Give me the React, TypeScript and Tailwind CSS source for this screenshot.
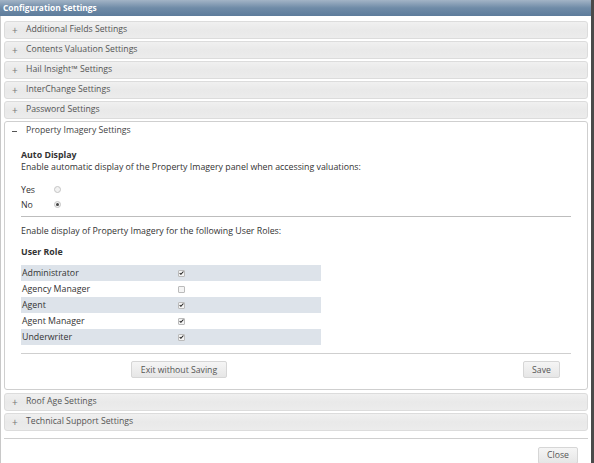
import { useState } from "react";

const FONT = { fontFamily: '"Open Sans", "DejaVu Sans", sans-serif' };

const collapsed = [
  "Additional Fields Settings",
  "Contents Valuation Settings",
  "Hail Insight™ Settings",
  "InterChange Settings",
  "Password Settings",
];

const roles = [
  { name: "Administrator", on: true },
  { name: "Agency Manager", on: false },
  { name: "Agent", on: true },
  { name: "Agent Manager", on: true },
  { name: "Underwriter", on: true },
];

function SectionHeader({ title }: { title: string }) {
  return (
    <div className="flex h-[18px] items-center rounded-[3px] border border-[#dcdcdc] bg-gradient-to-b from-[#f0f0f0] via-[#e9e9e9] to-[#ececec] pl-[7px] text-[8.7px] text-[#555]">
      <span className="w-[14px] text-[10px] leading-none text-[#777]">+</span>
      <span>{title}</span>
    </div>
  );
}

function Checkbox({ checked }: { checked: boolean }) {
  return (
    <span className="flex h-[7px] w-[7px] items-center justify-center rounded-[1px] border border-[#bbb] bg-[#f4f4f4]">
      {checked && (
        <svg width="6" height="6" viewBox="0 0 6 6">
          <path d="M0.8 3.2 L2.3 4.6 L5.3 1.2" stroke="#222" strokeWidth="1.3" fill="none" />
        </svg>
      )}
    </span>
  );
}

function Radio({ checked }: { checked: boolean }) {
  return (
    <span className="flex h-[7px] w-[7px] items-center justify-center rounded-full border border-[#c4c4c4] bg-[#f2f2f2]">
      {checked && <span className="h-[3px] w-[3px] rounded-full bg-[#444]" />}
    </span>
  );
}

function Button({ label, className = "" }: { label: string; className?: string }) {
  return (
    <button
      className={`flex h-[17px] items-center justify-center rounded-[2px] border border-[#d6d6d6] bg-gradient-to-b from-[#f5f5f5] to-[#e6e6e6] text-[8.7px] text-[#555] ${className}`}
    >
      {label}
    </button>
  );
}

export default function App() {
  const [autoDisplay] = useState(false);

  return (
    <div
      className="flex h-[463px] w-[594px] flex-col overflow-hidden border-r-[3px] border-[#4a4a4a] bg-white"
      style={FONT}
    >
      <div className="flex h-[16px] shrink-0 items-center bg-gradient-to-b from-[#a3b4c6] via-[#6f8ba7] to-[#5d7c9b] pl-[3px] text-[8.4px] font-bold text-white">
        Configuration Settings
      </div>

      <div className="flex flex-1 flex-col border-b border-l border-[#c8c8c8]">
        <div className="flex flex-col gap-[2px] px-[3px] pt-[5px]">
          {collapsed.map((t) => (
            <SectionHeader key={t} title={t} />
          ))}

          <div className="rounded-[3px] border border-[#cfcfcf] bg-white">
            <div className="flex h-[18px] items-center pl-[7px] text-[8.7px] text-[#444]">
              <span className="w-[14px]">
                <span className="block h-px w-[5px] bg-[#555]" />
              </span>
              <span>Property Imagery Settings</span>
            </div>

            <div className="px-[16px] pb-[11px] text-[8.8px] leading-[12px] text-[#333]">
              <div className="mt-[9px] font-bold">Auto Display</div>
              <div>
                Enable automatic display of the Property Imagery panel when accessing valuations:
              </div>

              <div className="mt-[11px] flex flex-col gap-[4px]">
                <div className="flex h-[11px] items-center">
                  <span className="w-[33px]">Yes</span>
                  <Radio checked={autoDisplay} />
                </div>
                <div className="flex h-[11px] items-center">
                  <span className="w-[33px]">No</span>
                  <Radio checked={!autoDisplay} />
                </div>
              </div>

              <div className="mt-[6px] h-px bg-[#bdbdbd]" />

              <div className="mt-[8px]">
                Enable display of Property Imagery for the following User Roles:
              </div>
              <div className="mt-[9px] font-bold">User Role</div>

              <div className="mt-[7px] w-[300px]">
                {roles.map((r, i) => (
                  <div
                    key={r.name}
                    className={`flex h-[16px] items-center ${i % 2 === 0 ? "bg-[#dde3ea]" : "bg-white"}`}
                  >
                    <span className="w-[157px] pl-[1px]">{r.name}</span>
                    <Checkbox checked={r.on} />
                  </div>
                ))}
              </div>

              <div className="mt-[8px] h-px bg-[#cfcfcf]" />

              <div className="mt-[7px] flex items-center">
                <Button label="Exit without Saving" className="ml-[110px] w-[96px]" />
                <Button label="Save" className="ml-auto mr-[11px] w-[37px]" />
              </div>
            </div>
          </div>

          <div className="mt-[1px] flex flex-col gap-[2px]">
            <SectionHeader title="Roof Age Settings" />
            <SectionHeader title="Technical Support Settings" />
          </div>
        </div>

        <div className="mx-[3px] mt-[7px] h-px bg-[#cfcfcf]" />
        <div className="flex justify-end pr-[13px] pt-[8px]">
          <Button label="Close" className="w-[40px]" />
        </div>
      </div>
    </div>
  );
}
